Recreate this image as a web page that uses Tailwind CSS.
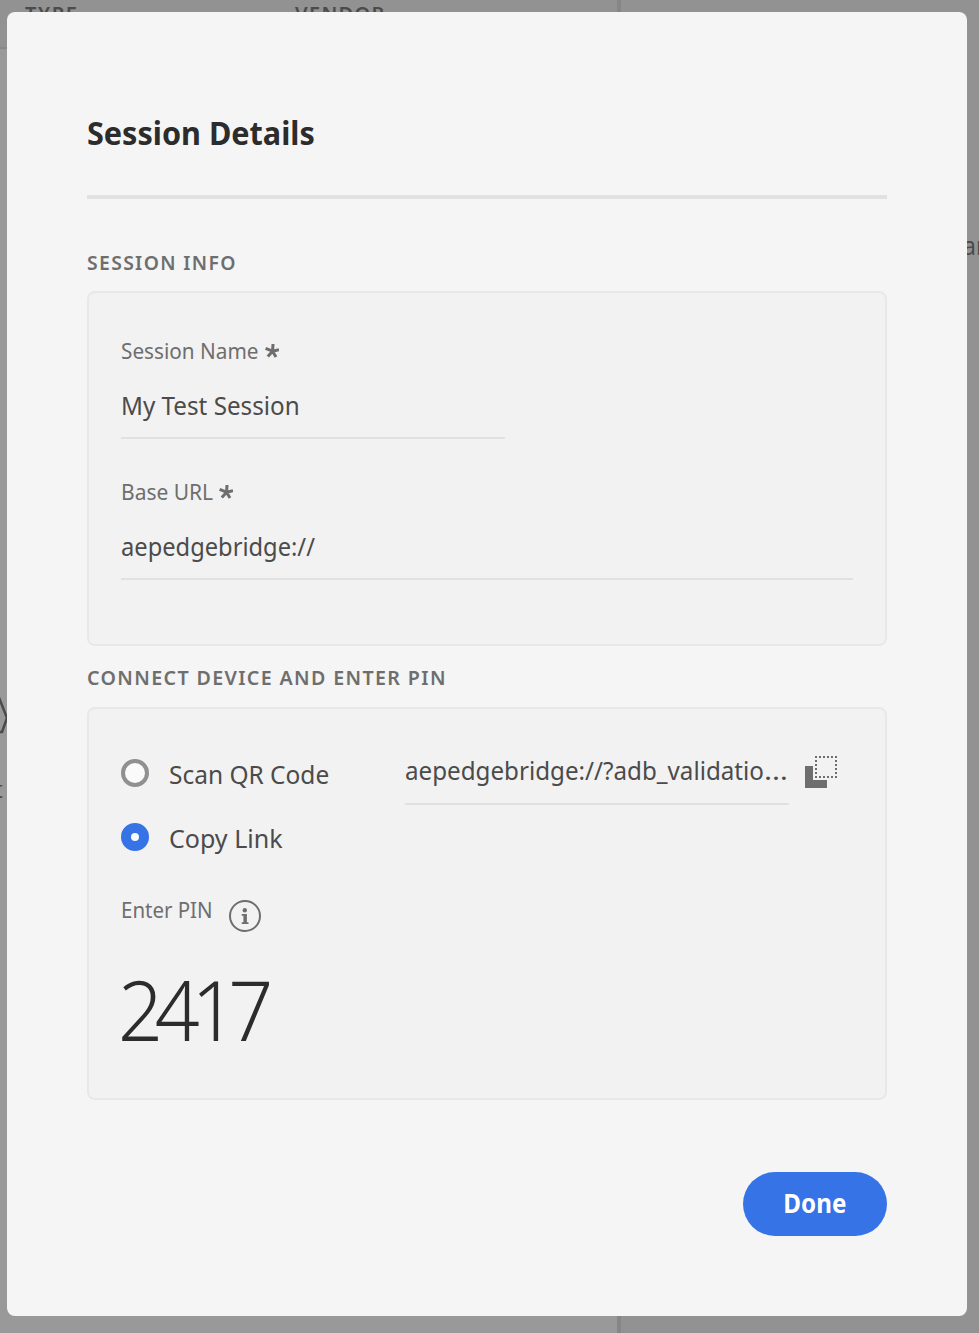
<!DOCTYPE html>
<html lang="en">
<head>
<meta charset="utf-8">
<title>Session Details</title>
<script src="https://cdn.jsdelivr.net/npm/@tailwindcss/browser@4"></script>
</head>
<body class="relative h-[1333px] w-[979px] overflow-hidden bg-[#929292] font-['Noto_Sans','Open_Sans',sans-serif] text-[#4b4b4b]">
  <!-- Dimmed page behind the dialog -->
  <div aria-hidden="true">
    <div class="absolute left-0 top-[47px] h-[1286px] w-[617px] border-t-2 border-[#888] bg-[#999]"></div>
    <div class="absolute left-[617px] top-0 h-full w-1 bg-[#868686]"></div>
    <span class="absolute left-[25px] top-[2px] text-[20px] leading-6 font-semibold tracking-[1.7px]">TYPE</span>
    <span class="absolute left-[295px] top-[2px] text-[20px] leading-6 font-semibold tracking-[1.3px]">VENDOR</span>
    <span class="absolute left-[963px] top-[230px] origin-left scale-x-92 text-[25px] leading-[30px]">an</span>
    <svg class="absolute left-0 top-[690px]" width="10" height="50" fill="none" stroke="#4b4b4b" stroke-width="2.5"><path d="M-2 5 7 28 2 42H-2"/></svg>
    <span class="absolute -left-[6px] top-[774px] text-[24px] leading-[30px]">t</span>
  </div>

  <main class="absolute left-[7px] top-3 flex h-[1304px] w-[960px] flex-col rounded-lg bg-[#f5f5f5] px-20 pt-[97px]">
    <h1 class="h-[90px] border-b-4 border-[#e1e1e1] text-[33px] leading-[48px] font-bold text-[#2c2c2c] whitespace-nowrap"><span class="inline-block origin-left scale-x-[0.927]">Session Details</span></h1>

    <h2 class="mt-[48px] h-[32px] text-[20px] leading-[32px] font-semibold tracking-[1.4px] text-[#6e6e6e] whitespace-nowrap"><span class="inline-block origin-left scale-x-[0.967]">SESSION INFO</span></h2>
    <section class="mt-[12px] h-[355px] rounded-lg border-2 border-[#e8e8e8] bg-[#f2f2f2] px-8 pt-[40px]">
      <div class="flex h-[34px] text-[22px] leading-[34px] whitespace-nowrap text-[#6e6e6e]">
        <span class="w-[144px]"><span class="inline-block origin-left scale-x-[0.942]">Session Name</span></span>
        <svg class="mt-[11px]" width="14" height="14" fill="none" stroke="#6e6e6e" stroke-width="3"><path d="M7.6 7.2 8 0M7.6 7.2 14 5.6M7.6 7.2 11 13M7.6 7.2 2.8 12.6M7.6 7.2.6 4.4"/></svg>
      </div>
      <div class="mt-[12px] h-[60px] w-[384px] border-b-2 border-[#e1e1e1] text-[26px] leading-[52px] whitespace-nowrap"><span class="inline-block origin-left scale-x-[0.931]">My Test Session</span></div>
      <div class="mt-[35px] flex h-[34px] text-[22px] leading-[34px] whitespace-nowrap text-[#6e6e6e]">
        <span class="w-[98px]"><span class="inline-block origin-left scale-x-[0.953]">Base URL</span></span>
        <svg class="mt-[11px]" width="14" height="14" fill="none" stroke="#6e6e6e" stroke-width="3"><path d="M7.6 7.2 8 0M7.6 7.2 14 5.6M7.6 7.2 11 13M7.6 7.2 2.8 12.6M7.6 7.2.6 4.4"/></svg>
      </div>
      <div class="mt-[12px] h-[60px] border-b-2 border-[#e1e1e1] text-[26px] leading-[52px] whitespace-nowrap"><span class="inline-block origin-left scale-x-[0.911]">aepedgebridge://</span></div>
    </section>

    <h2 class="mt-[16px] h-[32px] text-[20px] leading-[32px] font-semibold tracking-[1.4px] text-[#6e6e6e] whitespace-nowrap"><span class="inline-block origin-left scale-x-[0.981]">CONNECT DEVICE AND ENTER PIN</span></h2>
    <section class="mt-[13px] h-[393px] rounded-lg border-2 border-[#e8e8e8] bg-[#f2f2f2] px-8">
      <div class="flex">
        <div class="w-[284px] pt-[46px]">
          <label class="flex h-[40px] gap-5 text-[26px] leading-[38px] whitespace-nowrap"><i class="mt-1 size-7 shrink-0 rounded-full border-4 border-[#909090] bg-[#fafafa]"></i><span class="inline-block origin-left scale-x-[0.941]">Scan QR Code</span></label>
          <label class="mt-6 flex h-[40px] gap-5 text-[26px] leading-[38px] whitespace-nowrap"><i class="mt-1 size-7 shrink-0 rounded-full border-10 border-[#3573e6] bg-[#fafafa]"></i><span class="inline-block origin-left scale-x-[0.963]">Copy Link</span></label>
        </div>
        <div class="mt-[36px] h-[60px] w-[384px] border-b-2 border-[#e1e1e1] text-[26px] leading-[50px] whitespace-nowrap"><span class="inline-block origin-left scale-x-[0.93]">aepedgebridge://?adb_validatio<span class="inline-block origin-left scale-x-[1.25]">…</span></span></div>
        <svg class="ml-4 mt-[47px]" width="32" height="32" fill="#6e6e6e" shape-rendering="crispEdges"><path d="M0 10h8v14h14v8H0z"/><path fill="none" stroke="#6e6e6e" stroke-width="2" stroke-dasharray="2 2" d="M10 1h22M10 21h22M11 0v22M31 0v22"/></svg>
      </div>
      <div class="flex h-[76px] pt-[33px] text-[22px] leading-[34px] text-[#6e6e6e]">
        <span class="w-[108px] whitespace-nowrap"><span class="inline-block origin-left scale-x-[0.93]">Enter PIN</span></span>
        <svg class="mt-[8px]" width="32" height="32" viewBox="0 0 32 32" fill="#6e6e6e"><circle cx="16" cy="16" r="15" fill="none" stroke="#6e6e6e" stroke-width="2"/><circle cx="15.8" cy="10.2" r="2.2"/><path d="M12.7 14h5.2v8.2h1.6V24h-6.8v-1.8h1.7v-6.4h-1.7z"/></svg>
      </div>
      <div class="mt-[24px] h-[100px] text-[82px] leading-[100px] font-light whitespace-nowrap text-[#2c2c2c]"><span class="-ml-[3px] inline-block origin-left scale-x-[0.96] tracking-[-8.5px]">2417</span></div>
    </section>

    <button class="mt-[72px] flex h-16 w-36 items-center justify-center self-end rounded-full bg-[#3573e6] pb-[2px] text-[26px] leading-[60px] font-bold text-white"><span class="inline-block scale-x-[0.93]">Done</span></button>
  </main>
</body>
</html>
